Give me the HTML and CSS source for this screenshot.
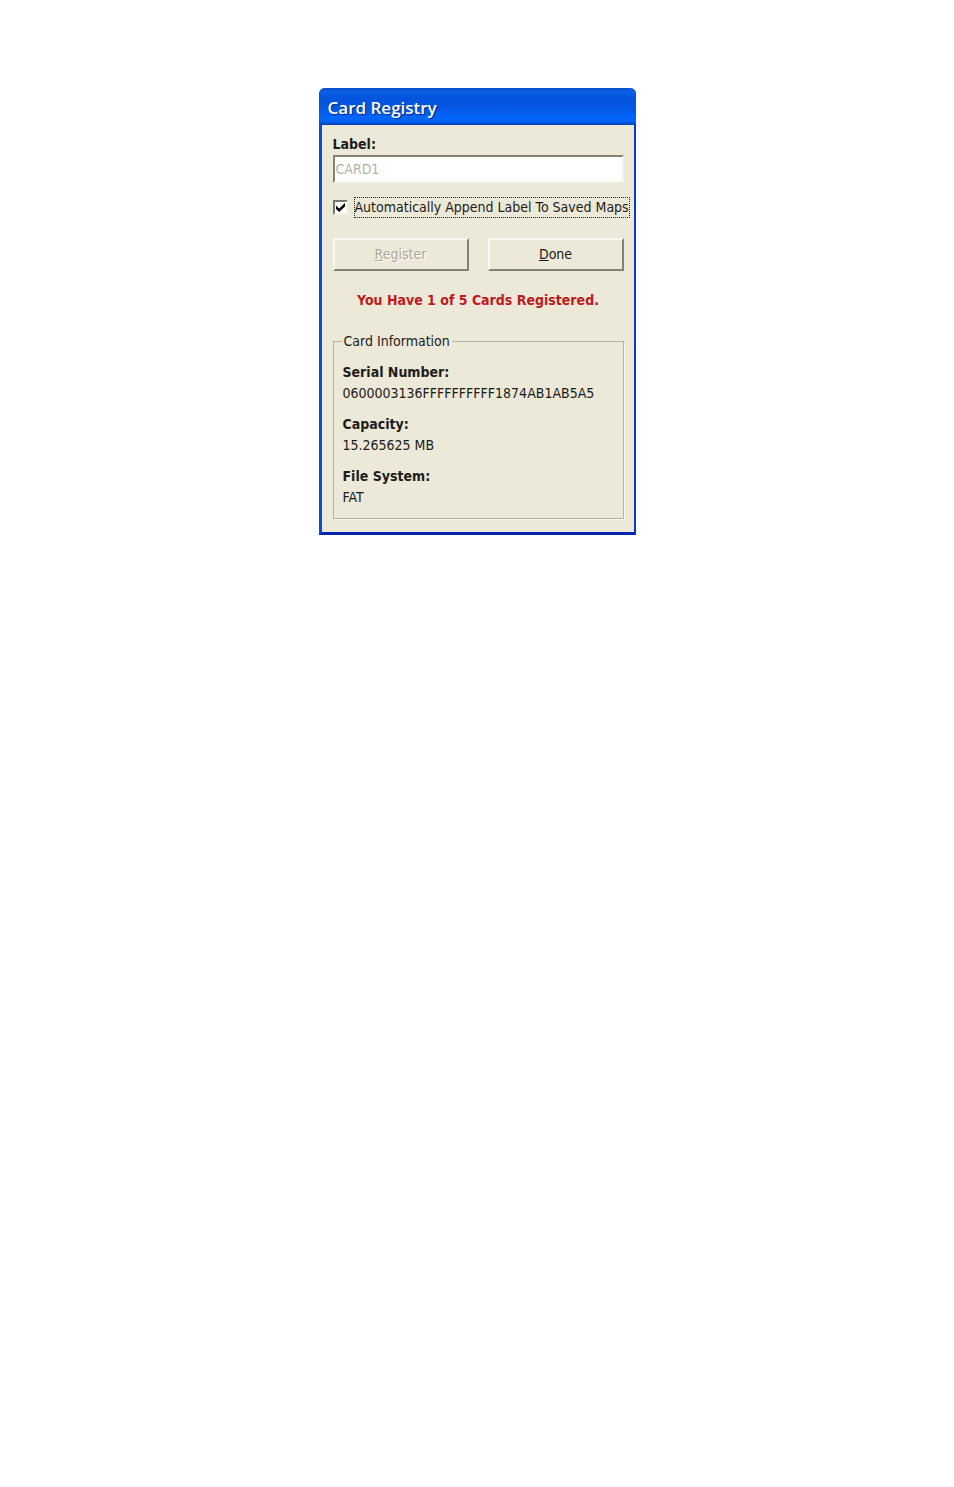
FILE: index.html
```html
<!DOCTYPE html>
<html lang="en">
<head>
    <meta charset="UTF-8">
    <meta name="viewport" content="width=device-width, initial-scale=1.0">
    <title>Card Registry</title>
    <link rel="stylesheet" href="styles.css">
</head>
<body>
    <main class="dialog">
        <h1 class="title-bar">Card Registry</h1>

        <form class="dialog-body">
            <label class="field-label" for="card-label">Label:</label>
            <input class="text-box" type="text" id="card-label" value="CARD1" disabled>

            <div class="check-row">
                <input class="check-box" type="checkbox" id="append-label" checked>
                <label class="check-label" for="append-label">Automatically Append Label To Saved Maps</label>
            </div>

            <div class="buttons">
                <button type="button" disabled><u>R</u>egister</button>
                <button type="button"><u>D</u>one</button>
            </div>

            <p class="message">You Have 1 of 5 Cards Registered.</p>

            <fieldset class="card-info">
                <legend>Card Information</legend>
                <dl>
                    <dt>Serial Number:</dt>
                    <dd>0600003136FFFFFFFFFF1874AB1AB5A5</dd>
                    <dt>Capacity:</dt>
                    <dd>15.265625 MB</dd>
                    <dt>File System:</dt>
                    <dd>FAT</dd>
                </dl>
            </fieldset>
        </form>
    </main>
</body>
</html>
```
FILE: styles.css
```css
* {
    box-sizing: border-box;
}
body {
    margin: 0;
    padding: 88px 16px;
    background: #ffffff;
    font-family: Tahoma, "DejaVu Sans Condensed", "Noto Sans", sans-serif;
    font-size: 14px;
    line-height: 21px;
    color: #1c1c1a;
}
.dialog {
    max-width: 317px;
    margin: 0 auto;
    background: #ece9d8;
    border: 3px solid #0b48e0;
    border-top: none;
    border-right: 2px solid #0a3bcb;
    border-bottom-color: #0726b0;
    border-radius: 6px 6px 0 0;
}
.title-bar {
    margin: 0 -2px 0 -3px;
    padding: 0 9px;
    height: 37px;
    border-radius: 6px 6px 0 0;
    background: linear-gradient(to bottom, #0a4fc8 0%, #0a5fe8 10%, #0453dc 28%, #0456e4 55%, #0066fc 80%, #0062f4 90%, #0340b8 100%);
    color: #ffffff;
    font-family: "Trebuchet MS", "Open Sans", sans-serif;
    font-size: 17px;
    font-weight: 600;
    line-height: 39px;
    text-shadow: 1px 1px 1px #0a2a80;
}
.dialog-body {
    padding: 9px 10px 13px 11px;
}
.field-label {
    display: block;
    font-weight: bold;
}
.text-box {
    display: block;
    width: 100%;
    height: 28px;
    padding: 0 1px;
    background: #ffffff;
    border: 2px solid;
    border-color: #85826f #f5f3e8 #f5f3e8 #85826f;
    font: inherit;
    color: #b3b1a8;
}
.check-row {
    display: flex;
    align-items: center;
    gap: 6px;
    margin-top: 14px;
    margin-right: -10px;
}
.check-box {
    appearance: none;
    flex: none;
    width: 15px;
    height: 15px;
    margin: 0;
    border: 2px solid;
    border-color: #77756a #f5f3e8 #f5f3e8 #77756a;
    background: #ffffff;
}
.check-box:checked {
    background: #ffffff url('data:image/svg+xml,<svg xmlns="http://www.w3.org/2000/svg" viewBox="0 0 11 11"><path d="M1 3.6L4.2 6.6L10 1V4.4L4.2 10L1 7Z" fill="black"/></svg>') center / 11px 11px no-repeat;
}
.check-label {
    border: 1px dotted #222222;
    line-height: 19px;
    white-space: nowrap;
}
.buttons {
    display: grid;
    grid-template-columns: 1fr 1fr;
    gap: 19px;
    margin-top: 20px;
}
button {
    height: 33px;
    padding: 0;
    background: #ece9d8;
    border: 2px solid;
    border-color: #faf9f1 #858371 #858371 #faf9f1;
    font: inherit;
    color: inherit;
}
button:disabled {
    color: #aaa899;
    text-shadow: 1px 1px 0 #ffffff;
}
.message {
    margin: 19px 0 20px;
    color: #bd1a1c;
    font-weight: bold;
    text-align: center;
}
.card-info {
    margin: 0;
    padding: 10px 9px;
    border: 1px solid #b5b2a1;
    box-shadow: 1px 1px 0 #f8f6ec;
}
.card-info legend {
    padding: 0 2px;
    margin-left: -1px;
}
.card-info dl {
    margin: 0;
}
.card-info dt {
    font-weight: bold;
}
.card-info dd {
    margin: 0;
}
.card-info dd + dt {
    margin-top: 10px;
}
```
